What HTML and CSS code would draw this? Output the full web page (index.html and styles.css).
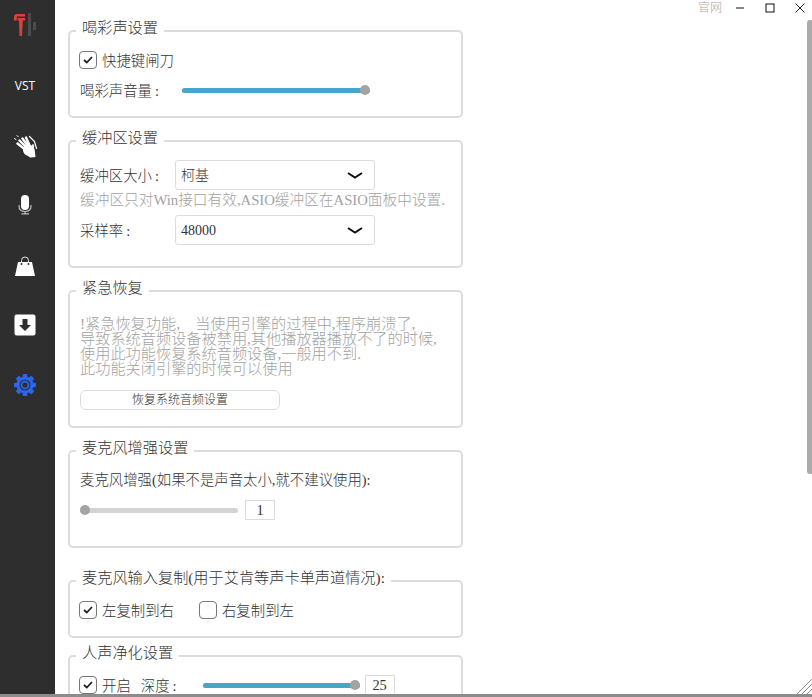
FILE: index.html
```html
<!DOCTYPE html>
<html lang="zh-CN">
<head>
<meta charset="utf-8">
<title>设置</title>
<link rel="stylesheet" href="styles.css">
</head>
<body>
<div class="window">
  <nav class="sidebar">
    <div class="nav-item nav-logo">
      <svg width="28" height="28" viewBox="0 0 28 28"><path d="M3 9.500V6Q3 3 6 3H14V5.500H5.800V9.500Z" fill="#d9443a"/><path d="M6.500 7H14V9.500H11.800L11 25H8.500L8 9.500H6.500Z" fill="#d9443a"/><rect x="17" y="2" width="3" height="23" fill="#4b4b4b"/><rect x="22" y="11" width="3" height="8" fill="#4b4b4b"/></svg>
    </div>
    <div class="nav-item nav-vst">VST</div>
    <div class="nav-item">
      <svg width="26" height="26" viewBox="0 0 26 26"><circle cx="16.500" cy="18" r="5.500" fill="#fff"/><path d="M12 21L18 25.500L23.500 25L22.500 17L17 14Z" fill="#fff"/><g fill="none" stroke="#fff" stroke-linecap="round"><path d="M15 19L5.500 11.500M16 17L7.500 8.500M17 15.500L10.500 6.500M18 14.500L14 5.500M20.500 19L21 13.500" stroke-width="2.400"/><path d="M17.500 4.500L22.500 9.500L24.500 16.500" stroke-width="1.200"/><path d="M2.500 6.500L4 7.500M5 3.500L6.300 4.800" stroke-width="1"/></g></svg>
    </div>
    <div class="nav-item">
      <svg width="24" height="26" viewBox="0 0 24 26"><rect x="8" y="3" width="8" height="15" rx="4" fill="#fff"/><path d="M6 13V14Q6 19.500 12 19.500Q18 19.500 18 14V13M12 19.500V21.500M8.500 21.800H16" fill="none" stroke="#bdbdbd" stroke-width="1.200"/></svg>
    </div>
    <div class="nav-item">
      <svg width="24" height="24" viewBox="0 0 24 24"><path d="M5 9H19L22 23H2Z" fill="#fff"/><path d="M8.500 10V7.500Q8.500 4 12 4Q15.500 4 15.500 7.500V10" fill="none" stroke="#e8e8e8" stroke-width="1"/><circle cx="8.500" cy="11" r="1" fill="#333"/><circle cx="15.500" cy="11" r="1" fill="#333"/></svg>
    </div>
    <div class="nav-item">
      <svg width="24" height="24" viewBox="0 0 24 24"><rect x="1.500" y="1.500" width="21" height="21" rx="2" fill="#fff"/><path d="M9.500 6H14.500V12H18L12 18L6 12H9.500Z" fill="#2e2e2e"/></svg>
    </div>
    <div class="nav-item">
      <svg width="26" height="26" viewBox="0 0 26 26"><g fill="#2a66f0"><rect x="10.700" y="2" width="4.600" height="22" rx="1"/><rect x="2" y="10.700" width="22" height="4.600" rx="1"/><rect x="10.700" y="2" width="4.600" height="22" rx="1" transform="rotate(45 13 13)"/><rect x="10.700" y="2" width="4.600" height="22" rx="1" transform="rotate(-45 13 13)"/><circle cx="13" cy="13" r="8.500"/></g><circle cx="13" cy="13" r="5.500" fill="#2e2e2e"/><circle cx="13" cy="13" r="3.500" fill="none" stroke="#2a66f0" stroke-width="1.800"/></svg>
    </div>
  </nav>

  <main class="content">
    <section class="group group-cheer">
      <h2 class="group-title">喝彩声设置</h2>
      <div class="row row-check">
        <span class="check is-on"><svg width="10" height="8" viewBox="0 0 10 8"><path d="M1 4L3.800 6.500L9 1" fill="none" stroke="#222" stroke-width="1.800"/></svg></span>
        <span class="opt">快捷键闸刀</span>
      </div>
      <div class="row row-volume">
        <span class="label label-volume">喝彩声音量<span class="colon">:</span></span>
        <div class="slider slider-wide"><div class="fill"></div><div class="thumb"></div></div>
      </div>
    </section>

    <section class="group group-buffer">
      <h2 class="group-title">缓冲区设置</h2>
      <div class="row row-select">
        <span class="label label-select">缓冲区大小<span class="colon">:</span></span>
        <div class="select"><span class="opt">柯基</span><svg width="16" height="7" viewBox="0 0 16 7"><path d="M1 1L8 5.500L15 1" fill="none" stroke="#111" stroke-width="2"/></svg></div>
      </div>
      <p class="hint hint-buffer">缓冲区只对Win接口有效,ASIO缓冲区在ASIO面板中设置.</p>
      <div class="row row-select">
        <span class="label label-select">采样率<span class="colon">:</span></span>
        <div class="select"><span class="select-num">48000</span><svg width="16" height="7" viewBox="0 0 16 7"><path d="M1 1L8 5.500L15 1" fill="none" stroke="#111" stroke-width="2"/></svg></div>
      </div>
    </section>

    <section class="group group-rescue">
      <h2 class="group-title">紧急恢复</h2>
      <p class="hint hint-rescue">!紧急恢复功能,&nbsp;&nbsp;&nbsp;&nbsp;当使用引擎的过程中,程序崩溃了,<br>导致系统音频设备被禁用,其他播放器播放不了的时候,<br>使用此功能恢复系统音频设备,一般用不到.<br>此功能关闭引擎的时候可以使用</p>
      <button class="btn" type="button">恢复系统音频设置</button>
    </section>

    <section class="group group-boost">
      <h2 class="group-title">麦克风增强设置</h2>
      <p class="boost-label">麦克风增强(如果不是声音太小,就不建议使用):</p>
      <div class="row row-boost">
        <div class="slider slider-boost"><div class="thumb thumb-start"></div></div>
        <span class="num">1</span>
      </div>
    </section>

    <section class="group group-copy">
      <h2 class="group-title">麦克风输入复制(用于艾肯等声卡单声道情况):</h2>
      <div class="row row-copy">
        <span class="check is-on"><svg width="10" height="8" viewBox="0 0 10 8"><path d="M1 4L3.800 6.500L9 1" fill="none" stroke="#222" stroke-width="1.800"/></svg></span>
        <span class="opt copy-left">左复制到右</span>
        <span class="check"></span>
        <span class="opt">右复制到左</span>
      </div>
    </section>

    <section class="group group-voice">
      <h2 class="group-title">人声净化设置</h2>
      <div class="row row-voice">
        <span class="check is-on"><svg width="10" height="8" viewBox="0 0 10 8"><path d="M1 4L3.800 6.500L9 1" fill="none" stroke="#222" stroke-width="1.800"/></svg></span>
        <span class="opt">开启</span>
        <span class="opt voice-depth">深度<span class="colon">:</span></span>
        <div class="slider slider-voice"><div class="fill"></div><div class="thumb"></div></div>
        <span class="num">25</span>
      </div>
    </section>
  </main>

  <div class="win-controls">
    <span class="site-link">官网</span>
    <svg class="win-btn" width="10" height="10" viewBox="0 0 10 10"><path d="M1 5H9" stroke="#111" stroke-width="1"/></svg>
    <svg class="win-btn" width="10" height="10" viewBox="0 0 10 10"><rect x="1" y="1" width="8" height="8" fill="none" stroke="#111" stroke-width="1"/></svg>
    <svg class="win-btn" width="10" height="10" viewBox="0 0 10 10"><path d="M0.500 0.500L9.500 9.500M9.500 0.500L0.500 9.500" stroke="#222" stroke-width="1"/></svg>
  </div>
  <div class="scrollbar"></div>
  <svg class="grip" width="15" height="15" viewBox="0 0 15 15"><path d="M0 15L15 0M5 15L15 5M10 15L15 10" stroke="#8a8a8a" stroke-width="1" fill="none"/></svg>
</div>
</body>
</html>
```
FILE: styles.css
```css
* { box-sizing: border-box; }
html, body { margin: 0; height: 100%; overflow: hidden; background: #fff; }
body {
  font-family: "Liberation Serif", "Noto Sans CJK SC", serif;
  font-size: 14.400px;
  font-weight: 300;
  color: #333;
}
.window {
  position: relative;
  display: flex;
  width: 812px;
  height: 697px;
  overflow: hidden;
  border-bottom: 3px solid #8c8c8c;
}
.sidebar {
  flex: 0 0 55px;
  background: #2e2e2e;
  display: flex;
  flex-direction: column;
  align-items: center;
  padding-top: 5px;
  gap: 20px;
}
.nav-item {
  width: 40px;
  height: 40px;
  display: flex;
  align-items: center;
  justify-content: center;
  margin-left: -5px;
}
.nav-vst {
  color: #fff;
  font-family: "Open Sans", "Noto Sans", sans-serif;
  font-size: 12px;
  font-weight: 400;
}
.content {
  flex: 1;
  min-width: 0;
  padding: 30px 0 0 13px;
  overflow: hidden;
}
.group {
  position: relative;
  width: 395px;
  border: 2px solid #dcdcdc;
  border-radius: 5px;
  padding: 0 10px;
}
.group-title {
  position: absolute;
  left: 6px;
  top: -14px;
  margin: 0;
  padding: 0 6px;
  background: #fff;
  font-size: 15.200px;
  line-height: 20px;
  font-weight: 300;
  color: #333;
  white-space: nowrap;
}
.group-cheer { height: 88px; margin-bottom: 22px; padding-top: 18px; }
.group-buffer { height: 128px; margin-bottom: 22px; padding-top: 18px; }
.group-rescue { height: 138px; margin-bottom: 22px; padding-top: 24px; }
.group-boost { height: 98px; margin-bottom: 32px; padding-top: 18px; }
.group-copy { height: 58px; margin-bottom: 17px; padding-top: 18px; }
.group-voice { height: 60px; padding-top: 18px; }
.row { display: flex; align-items: center; }
.row-check { height: 20px; gap: 5px; margin-left: -1px; }
.row-volume { height: 20px; margin-top: 10px; }
.opt, .label { margin-bottom: 2px; }
.colon { margin-left: 3px; }
.label-volume { width: 102px; flex: none; }
.check {
  flex: none;
  width: 18px;
  height: 18px;
  border: 1px solid #777;
  border-radius: 4px;
  display: inline-flex;
  align-items: center;
  justify-content: center;
  background: #fff;
}
.slider {
  position: relative;
  height: 5px;
  border-radius: 3px;
  background: #d4d4d4;
}
.slider .fill {
  position: absolute;
  inset: 0;
  border-radius: 3px;
  background: #45a5cc;
}
.thumb {
  position: absolute;
  right: 0;
  top: -2.500px;
  width: 10px;
  height: 10px;
  border-radius: 50%;
  background: #a3a3a3;
}
.thumb-start { left: 0; right: auto; }
.slider-wide { width: 188px; }
.row-select { height: 30px; }
.label-select { width: 95px; flex: none; }
.select {
  width: 200px;
  height: 30px;
  border: 1px solid #dcdcdc;
  border-radius: 3px;
  display: flex;
  align-items: center;
  justify-content: space-between;
  padding: 0 11px 0 5px;
  font-size: 14px;
  color: #333;
}
.select-num { margin-top: 2px; }
.hint { margin: 0; color: #a2a2a2; font-size: 15.200px; }
.hint-buffer { height: 25px; line-height: 20px; white-space: nowrap; font-size: 14.700px; }
.hint-rescue { line-height: 15px; height: 66px; white-space: nowrap; }
.btn {
  display: block;
  width: 200px;
  height: 20px;
  padding: 0;
  border: 1px solid #dcdcdc;
  border-radius: 6px;
  background: #fff;
  color: #333;
  font: inherit;
  font-size: 12px;
  line-height: 18px;
  margin-top: 8px;
}
.boost-label { margin: 0; height: 20px; line-height: 20px; white-space: nowrap; }
.row-boost { margin-top: 10px; height: 20px; }
.slider-boost { width: 158px; }
.num {
  flex: none;
  width: 30px;
  height: 20px;
  border: 1px solid #dcdcdc;
  display: flex;
  align-items: center;
  justify-content: center;
  color: #333;
}
.row-boost .num { margin-left: 7px; }
.row-copy { height: 20px; margin-left: -1px; gap: 5px; }
.copy-left { margin-right: 20px; }
.row-voice { height: 20px; margin-left: -1px; gap: 5px; }
.voice-depth { margin-left: 5px; }
.slider-voice { width: 157px; margin-left: 21px; }
.win-controls {
  position: absolute;
  top: 0;
  right: 7px;
  display: flex;
  align-items: center;
  height: 16px;
  gap: 20px;
}
.site-link { font-size: 12px; line-height: 16px; color: #a8a8a8; margin-right: -7px; }
.win-btn { display: block; }
.scrollbar {
  position: absolute;
  top: 20px;
  right: 0;
  width: 5px;
  height: 454px;
  background: #ababab;
  border-radius: 3px 0 0 3px;
}
.grip { position: absolute; right: 0; bottom: 0; }
```
